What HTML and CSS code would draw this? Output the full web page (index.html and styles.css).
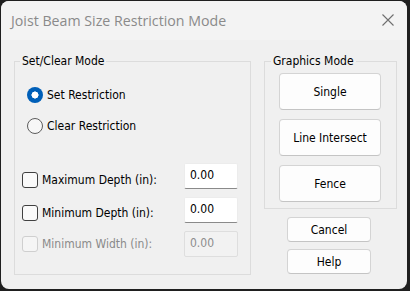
FILE: index.html
```html
<!DOCTYPE html>
<html>
<head>
<meta charset="utf-8">
<link rel="stylesheet" href="styles.css">
</head>
<body>
<div class="window">
  <div class="titlebar">
    <span class="title">Joist Beam Size Restriction Mode</span>
    <svg class="close" width="12" height="12" viewBox="0 0 12 12"><path d="M0.5 0.5 L11.5 11.5 M11.5 0.5 L0.5 11.5" stroke="#6f6f6f" stroke-width="1.1" fill="none"/></svg>
  </div>
  <div class="content">
    <fieldset class="group group-mode">
      <legend>Set/Clear Mode</legend>
      <div class="radios">
        <div class="radio"><span class="dot dot-on"></span>Set Restriction</div>
        <div class="radio"><span class="dot"></span>Clear Restriction</div>
      </div>
      <div class="fields">
        <div class="field field-1"><div class="check"><span class="box"></span>Maximum Depth (in):</div><span class="input">0.00</span></div>
        <div class="field field-2"><div class="check"><span class="box"></span>Minimum Depth (in):</div><span class="input">0.00</span></div>
        <div class="field field-3 disabled"><div class="check"><span class="box"></span>Minimum Width (in):</div><span class="input">0.00</span></div>
      </div>
    </fieldset>
    <div class="side">
      <fieldset class="group group-gfx">
        <legend>Graphics Mode</legend>
        <div class="gfx-buttons">
          <button class="btn btn-big">Single</button>
          <button class="btn btn-big">Line Intersect</button>
          <button class="btn btn-big">Fence</button>
        </div>
      </fieldset>
      <div class="actions">
        <button class="btn btn-small">Cancel</button>
        <button class="btn btn-small">Help</button>
      </div>
    </div>
  </div>
</div>
</body>
</html>
```
FILE: styles.css
```css
* { box-sizing: border-box; }
html, body { margin: 0; padding: 0; }
body {
  background: #1f1f1f;
  width: 410px;
  height: 291px;
  padding: 1px 0 0 1px;
  overflow: hidden;
  font-family: "DejaVu Sans Condensed", "DejaVu Sans", sans-serif;
  font-stretch: condensed;
  font-size: 12px;
  line-height: 16px;
  color: #000;
}
.window {
  width: 406px;
  height: 288px;
  border-radius: 8px;
  background: #f0f0f0;
  overflow: hidden;
  display: flex;
  flex-direction: column;
}
.titlebar {
  height: 39px;
  flex: none;
  background: #f3f3f3;
  display: flex;
  align-items: center;
  justify-content: space-between;
  padding: 0 13px 0 10px;
}
.title {
  font-family: "Open Sans", sans-serif;
  font-stretch: normal;
  font-size: 14.2px;
  color: #8a8a8a;
}
.close { display: block; margin-top: -1px; }
.content {
  display: flex;
  align-items: flex-start;
  gap: 13px;
  padding: 13px 0 0 13px;
}
.group {
  margin: 0;
  border: 1px solid #dcdcdc;
  min-width: 0;
}
.group legend {
  padding: 0 2px;
  line-height: 16px;
}
.group-mode {
  width: 237px;
  padding: 0 12px 17px 7px;
}
.group-mode legend { margin-left: -2px; }
.radios {
  display: flex;
  flex-direction: column;
  gap: 15px;
  margin-top: 18px;
  padding-left: 5px;
}
.radio {
  display: flex;
  align-items: center;
  height: 16px;
  gap: 4px;
}
.dot {
  width: 16px;
  height: 16px;
  border-radius: 50%;
  border: 1px solid #5c5c5c;
  background: #f7f7f7;
  flex: none;
}
.dot-on {
  border: none;
  background: radial-gradient(circle, #fff 0 3.3px, #005fb8 3.8px);
}
.fields {
  display: flex;
  flex-direction: column;
  gap: 8px;
  margin-top: 29px;
}
.field {
  display: flex;
  justify-content: space-between;
  align-items: flex-start;
  height: 26px;
}
.check {
  display: flex;
  align-items: center;
  gap: 4px;
  height: 16px;
}
.field-1 .check { margin-top: 9px; }
.field-2 .check { margin-top: 8px; }
.field-3 .check { margin-top: 5px; }
.box {
  width: 16px;
  height: 16px;
  border-radius: 3px;
  border: 1px solid #404040;
  background: #fafafa;
  flex: none;
}
.input {
  width: 54px;
  height: 26px;
  background: #fff;
  border: 1px solid #ececec;
  border-bottom-color: #8a8a8a;
  border-radius: 2px;
  padding: 3px 0 0 5px;
}
.disabled { color: #8a8a8a; }
.disabled .box { border-color: #cfcfcf; background: #f5f5f5; }
.disabled .input {
  background: #f2f2f2;
  border: 1px solid #dedede;
  color: #8d8d8d;
}
.side {
  display: flex;
  flex-direction: column;
}
.group-gfx {
  width: 133px;
  padding: 0 0 6px 14px;
}
.group-gfx legend { margin-left: -8px; }
.gfx-buttons {
  display: flex;
  flex-direction: column;
  gap: 9px;
  margin-top: 4px;
}
.btn {
  font: inherit;
  color: #000;
  background: #fdfdfd;
  border: 1px solid #d4d4d4;
  border-bottom-color: #c4c4c4;
  border-radius: 4px;
  padding: 0;
}
.btn-big { width: 102px; height: 37px; }
.actions {
  display: flex;
  flex-direction: column;
  gap: 7px;
  margin: 8px 0 0 23px;
}
.btn-small { width: 84px; height: 25px; }
```
